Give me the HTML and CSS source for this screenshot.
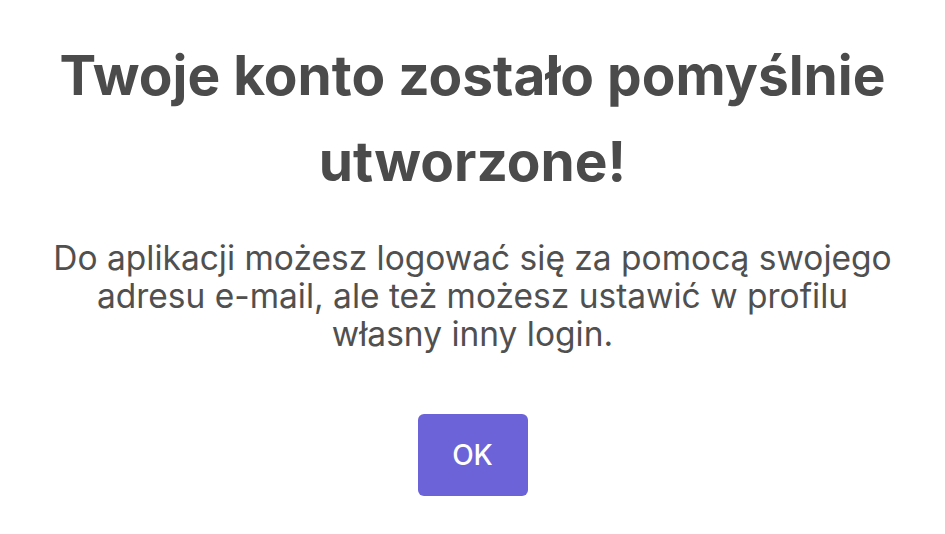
FILE: index.html
```html
<!DOCTYPE html>
<html lang="pl">
<head>
<meta charset="utf-8">
<link rel="stylesheet" href="styles.css">
</head>
<body>
<main class="dialog">
  <h1 class="title">Twoje konto zostało pomyślnie utworzone!</h1>
  <p class="message">Do aplikacji możesz logować się za pomocą swojego adresu e-mail, ale też możesz ustawić w profilu własny inny login.</p>
  <button class="ok-button" type="button">OK</button>
</main>
</body>
</html>
```
FILE: styles.css
```css
html, body {
  margin: 0;
  padding: 0;
  background: #ffffff;
}
body {
  font-family: Inter, "Noto Sans", sans-serif;
  color: #4a4a4a;
}
.dialog {
  display: flex;
  flex-direction: column;
  align-items: center;
  padding: 32px 30px 0;
  text-align: center;
}
.title {
  margin: 0;
  max-width: 870px;
  font-size: 55px;
  font-weight: 700;
  line-height: 86px;
  color: #4b4b4b;
}
.message {
  margin: 35px 0 0;
  max-width: 860px;
  font-size: 33.5px;
  font-weight: 400;
  line-height: 38px;
  color: #505050;
}
.ok-button {
  margin-top: 61px;
  width: 110px;
  height: 82px;
  border: none;
  border-radius: 6px;
  background: #6c63d8;
  color: #ffffff;
  font-family: Inter, "Noto Sans", sans-serif;
  font-size: 28px;
  font-weight: 500;
}
```
